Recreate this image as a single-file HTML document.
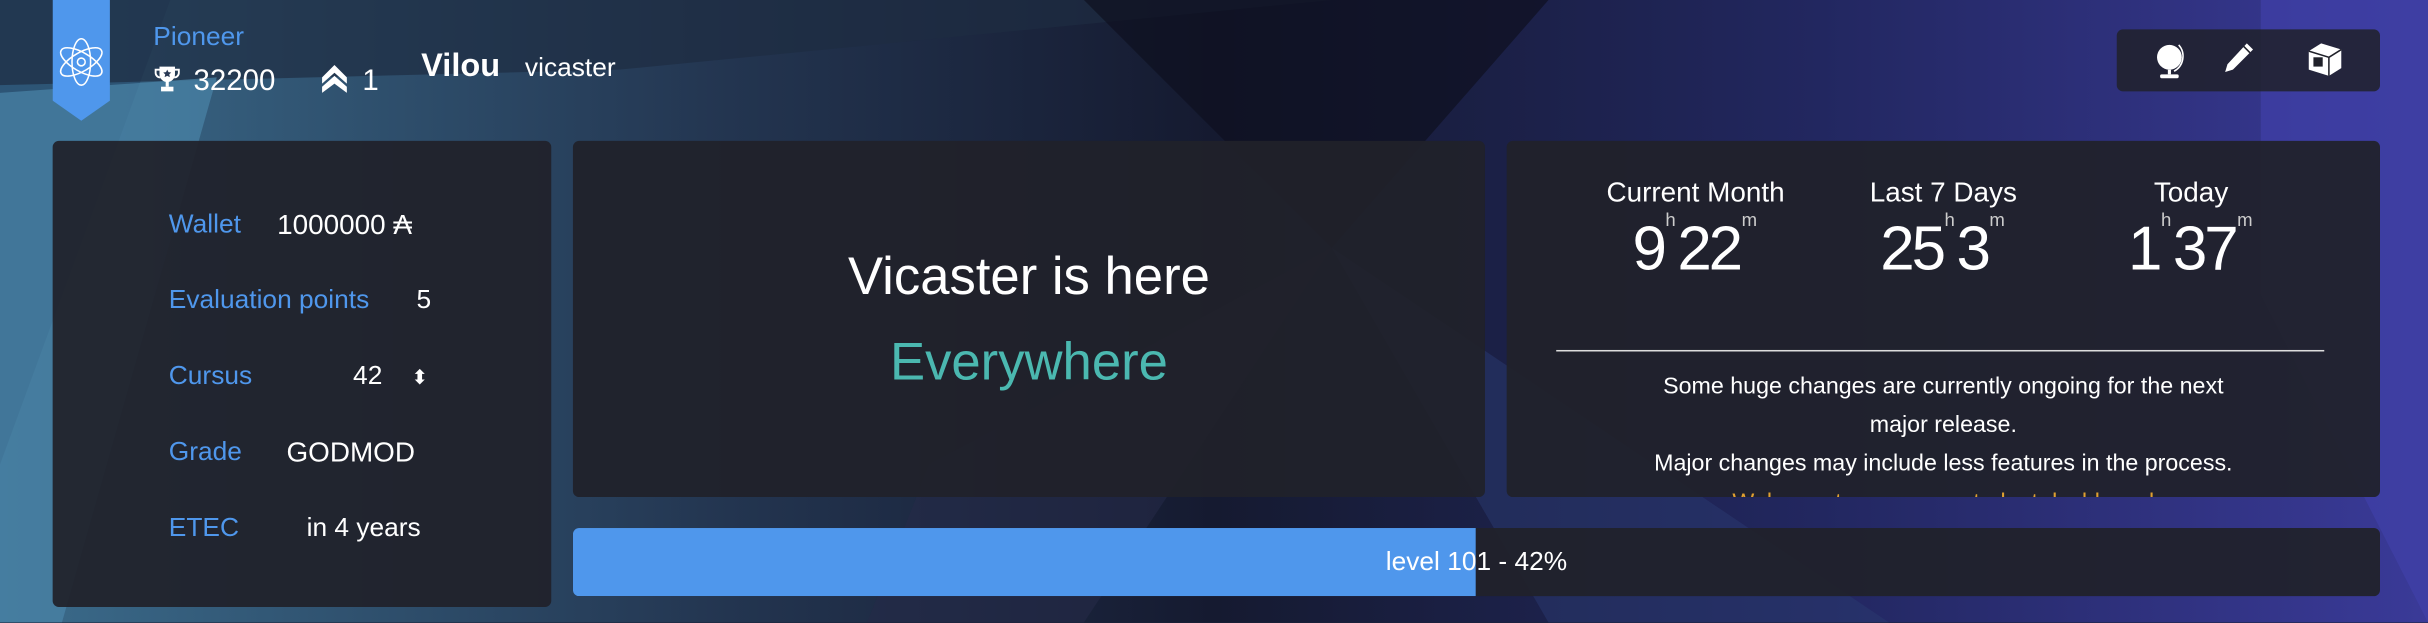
<!DOCTYPE html>
<html><head><meta charset="utf-8"><style>
html,body{margin:0;padding:0;width:2428px;height:622px;overflow:hidden;background:#1b2238}
#w{position:absolute;left:0;top:0;width:1568px;height:402px;transform:scale(1.54847);transform-origin:0 0;font-family:"Liberation Sans",sans-serif;color:#fff}
.p{position:absolute;background:rgba(32,33,42,0.93);border-radius:4px}
.lab{position:absolute;color:#4f97ec;font-size:17px}
.val{position:absolute;color:#fff;font-size:17px}
.col{position:absolute;top:114px;width:180px;text-align:center}
.col .t{font-size:18px}
.col .n{font-size:40px;margin-top:4px;letter-spacing:-2px}
.col sup{font-size:12px;color:#ccc;vertical-align:top;position:relative;top:-4px;letter-spacing:0;margin:0 1px}
</style></head><body><div id="w">
<svg width="1568" height="402" style="position:absolute;left:0;top:0">
<defs><linearGradient id="g" x1="0" y1="0" x2="1" y2="0"><stop offset="0" stop-color="#3b6c8c"/><stop offset="0.3" stop-color="#233550"/><stop offset="0.5" stop-color="#151a30"/><stop offset="0.75" stop-color="#222760"/><stop offset="1" stop-color="#3a3a98"/></linearGradient></defs>
<rect width="1568" height="402" fill="url(#g)"/>
<polygon points="0,0 110,0 0,300" fill="#2a5070" opacity="0.8"/>
<polygon points="0,55 400,45 860,0 0,0" fill="#1e2c42" opacity="0.7"/>
<polygon points="0,60 140,50 40,402 0,402" fill="#4a85a8" opacity="0.7"/>
<polygon points="700,0 1000,0 860,160" fill="#0e1020" opacity="0.7"/>
<polygon points="860,160 1220,402 1000,402" fill="#2a3a70" opacity="0.5"/>
<polygon points="1460,0 1568,0 1568,402 1460,190" fill="#4040a8" opacity="0.7"/>
<polygon points="600,300 860,160 700,402 560,402" fill="#252a48" opacity="0.6"/>
</svg>
<svg style="position:absolute;left:34px;top:0" width="37" height="79" viewBox="0 0 37 79"><polygon points="0,0 37,0 37,65 18.5,78 0,65" fill="#4f97ec"/>
<g fill="none" stroke="#fff" stroke-width="1"><ellipse cx="18.5" cy="40" rx="6" ry="15"/><ellipse cx="18.5" cy="40" rx="6" ry="15" transform="rotate(60 18.5 40)"/><ellipse cx="18.5" cy="40" rx="6" ry="15" transform="rotate(-60 18.5 40)"/><circle cx="18.5" cy="40" r="2.5"/></g></svg>
<div style="position:absolute;left:99px;top:14px;color:#4f97ec;font-size:17px">Pioneer</div>
<svg style="position:absolute;left:99px;top:42px" width="18" height="18" viewBox="0 0 18 18"><path d="M4 1h10v5a5 5 0 0 1-10 0z" fill="#fff"/><path d="M4 3H1.5v2a3 3 0 0 0 3 3M14 3h2.5v2a3 3 0 0 1-3 3" stroke="#fff" fill="none" stroke-width="1.2"/><rect x="8" y="10" width="2" height="4" fill="#fff"/><rect x="5" y="14" width="8" height="3" fill="#fff"/><path d="M9 3l.8 1.6 1.8.2-1.3 1.2.4 1.8L9 7 7.3 7.8l.4-1.8L6.4 4.8l1.8-.2z" fill="#2a3a55"/></svg>
<div style="position:absolute;left:125px;top:42px;font-size:19px">32200</div>
<svg style="position:absolute;left:207px;top:42px" width="18" height="18" viewBox="0 0 18 18"><path d="M9 0l8 8v4L9 5 1 12V8z M9 7l8 7v4L9 12 1 18v-4z" fill="#fff"/></svg>
<div style="position:absolute;left:234px;top:42px;font-size:19px">1</div>
<div style="position:absolute;left:272px;top:31px;font-size:21px;font-weight:bold">Vilou</div>
<div style="position:absolute;left:339px;top:34px;font-size:17px">vicaster</div>
<div class="p" style="left:1367px;top:19px;width:170px;height:40px;background:rgba(32,33,42,0.85)"></div>
<svg style="position:absolute;left:1388px;top:25px" width="130" height="28" viewBox="0 0 130 28">
<circle cx="13" cy="12" r="8" fill="#fff"/><path d="M19 4a11 11 0 0 1-3 17" stroke="#fff" fill="none" stroke-width="1"/><rect x="12" y="20" width="2" height="3" fill="#fff"/><rect x="7" y="23" width="12" height="2.5" rx="1" fill="#fff"/>
<path d="M63 3l4 4-13 13-5 1.5 1.5-5z" fill="#fff"/><path d="M61 5l4 4" stroke="#20212a" stroke-width="1"/>
<path d="M111 3l13 4v12l-8 5-13-4V8z" fill="#fff"/><path d="M103 8l13 4v12M116 12l8-5" stroke="#20212a" fill="none" stroke-width="1"/><rect x="106" y="12" width="6" height="6" fill="#20212a"/>
</svg>
<div class="p" style="left:34px;top:91px;width:322px;height:301px"></div>
<div class="lab" style="left:109px;top:135px">Wallet</div><div class="val" style="left:179px;top:135px;font-size:18px">1000000 ₳</div>
<div class="lab" style="left:109px;top:184px">Evaluation points</div><div class="val" style="left:269px;top:184px">5</div>
<div class="lab" style="left:109px;top:233px">Cursus</div><div class="val" style="left:228px;top:233px">42 <span style="font-size:13px;margin-left:14px">⬍</span></div>
<div class="lab" style="left:109px;top:282px">Grade</div><div class="val" style="left:185px;top:282px;font-size:18px">GODMOD</div>
<div class="lab" style="left:109px;top:331px">ETEC</div><div class="val" style="left:198px;top:331px">in 4 years</div>
<div class="p" style="left:370px;top:91px;width:589px;height:230px"></div>
<div style="position:absolute;left:370px;width:589px;top:160px;text-align:center;font-size:34px">Vicaster is here</div>
<div style="position:absolute;left:370px;width:589px;top:215px;text-align:center;font-size:34px;color:#4bb8b0">Everywhere</div>
<div class="p" style="left:973px;top:91px;width:564px;height:230px;overflow:hidden">
<div style="position:absolute;left:32px;right:36px;top:135px;border-top:1px solid #ddd"></div>
<div style="position:absolute;left:0;right:0;top:146px;text-align:center;font-size:15px;line-height:25px">Some huge changes are currently ongoing for the next<br>major release.<br>Major changes may include less features in the process.<br><span style="color:#e0a030">Welcome to your new student dashboard</span></div>
</div>
<div class="col" style="left:1005px"><div class="t">Current Month</div><div class="n">9<sup>h</sup>22<sup>m</sup></div></div>
<div class="col" style="left:1165px"><div class="t">Last 7 Days</div><div class="n">25<sup>h</sup>3<sup>m</sup></div></div>
<div class="col" style="left:1325px"><div class="t">Today</div><div class="n">1<sup>h</sup>37<sup>m</sup></div></div>
<div class="p" style="left:370px;top:341px;width:1167px;height:44px;overflow:hidden"><div style="position:absolute;left:0;top:0;bottom:0;width:583px;background:#4f97ec"></div></div>
<div style="position:absolute;left:370px;width:1167px;top:353px;text-align:center;font-size:17px">level 101 - 42%</div>
</div></body></html>
